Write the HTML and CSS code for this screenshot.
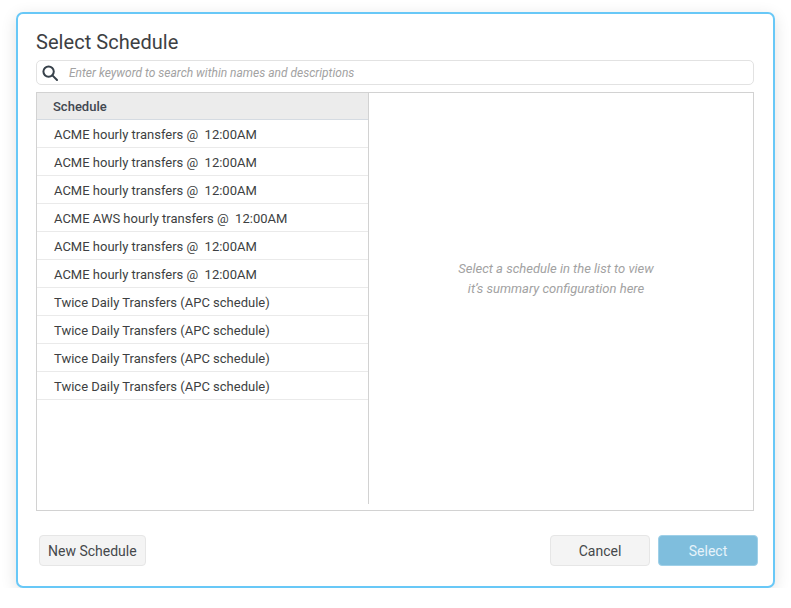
FILE: index.html
```html
<!DOCTYPE html>
<html lang="en">

<head>
  <meta charset="UTF-8">
  <meta name="viewport" content="width=device-width, initial-scale=1.0">
  <title>Select Schedule</title>
  <link rel="stylesheet" href="styles.css">
</head>

<body>
  <div class="dialog">
    <h1 class="title">Select Schedule</h1>

    <div class="search">
      <svg class="search-icon" width="16" height="16" viewBox="0 0 16 16" fill="none" stroke="#37414a" stroke-width="2">
        <circle cx="6.6" cy="6.6" r="5.2"></circle>
        <path d="M10.4 10.4 L15 15" stroke-linecap="round"></path>
      </svg>
      <span class="search-text">Enter keyword to search within names and descriptions</span>
    </div>

    <div class="panel">
      <div class="list">
        <div class="list-head">Schedule</div>
        <ul>
          <li>ACME hourly transfers @&nbsp; 12:00AM</li>
          <li>ACME hourly transfers @&nbsp; 12:00AM</li>
          <li>ACME hourly transfers @&nbsp; 12:00AM</li>
          <li>ACME AWS hourly transfers @&nbsp; 12:00AM</li>
          <li>ACME hourly transfers @&nbsp; 12:00AM</li>
          <li>ACME hourly transfers @&nbsp; 12:00AM</li>
          <li>Twice Daily Transfers (APC schedule)</li>
          <li>Twice Daily Transfers (APC schedule)</li>
          <li>Twice Daily Transfers (APC schedule)</li>
          <li>Twice Daily Transfers (APC schedule)</li>
        </ul>
      </div>
      <div class="summary">
        <p>Select a schedule in the list to view<br>it’s summary configuration here</p>
      </div>
    </div>

    <div class="footer">
      <button class="btn btn-new">New Schedule</button>
      <div class="footer-right">
        <button class="btn btn-wide">Cancel</button>
        <button class="btn btn-wide btn-primary">Select</button>
      </div>
    </div>
  </div>
</body>

</html>
```

FILE: styles.css
```css
* {
  margin: 0;
  padding: 0;
  box-sizing: border-box;
}

ul {
  list-style: none;
}

body {
  background-color: #fff;
  font-family: Roboto, "Liberation Sans", sans-serif;
  color: #3c4147;
  padding: 12px 16px 0;
}

.dialog {
  width: 759px;
  height: 576px;
  padding: 15px 19px 0 18px;
  background-color: #fff;
  border: 2px solid #68c8f7;
  border-radius: 7px;
  box-shadow: 0 4px 16px rgba(0, 0, 0, 0.12);
}

.title {
  font-size: 20px;
  font-weight: 400;
  line-height: 27px;
  letter-spacing: 0.05px;
  color: #3d4043;
}

.search {
  display: flex;
  align-items: center;
  height: 25px;
  margin-top: 4px;
  padding-left: 5px;
  border: 1px solid #e2e2e2;
  border-radius: 5px;
}

.search-icon {
  flex: none;
}

.search-text {
  margin-left: 11px;
  font-size: 12px;
  font-style: italic;
  color: #a2a2a2;
}

.panel {
  display: flex;
  height: 419px;
  margin-top: 7px;
  border: 1px solid #d2d2d2;
}

.list {
  width: 332px;
  height: 411px;
  border-right: 1px solid #d2d2d2;
}

.list-head {
  height: 27px;
  padding-left: 16px;
  background-color: #ececec;
  border-bottom: 1px solid #d5dbe2;
  font-size: 13px;
  font-weight: 500;
  line-height: 27px;
  color: #414750;
}

.list li {
  height: 28px;
  padding-left: 17px;
  border-bottom: 1px solid #eaeaea;
  font-size: 13px;
  line-height: 29px;
  color: #3d3f42;
}

.summary {
  flex: 1;
  display: flex;
  justify-content: center;
  padding-top: 166px;
  padding-right: 10px;
}

.summary p {
  font-size: 13px;
  font-style: italic;
  line-height: 20px;
  text-align: center;
  color: #a2a2a2;
}

.footer {
  display: flex;
  justify-content: space-between;
  margin-top: 24px;
  padding-left: 3px;
  margin-right: -4px;
}

.footer-right {
  display: flex;
  gap: 8px;
}

.btn {
  height: 31px;
  padding: 0 8px;
  background-color: #f4f4f4;
  border: 1px solid #e6e6e6;
  border-radius: 4px;
  font-family: inherit;
  font-size: 14px;
  color: #45484b;
}

.btn-wide {
  width: 100px;
}

.btn-primary {
  background-color: #7fbedd;
  border-color: #9fd0e8;
  color: #e6f3fa;
}
```
